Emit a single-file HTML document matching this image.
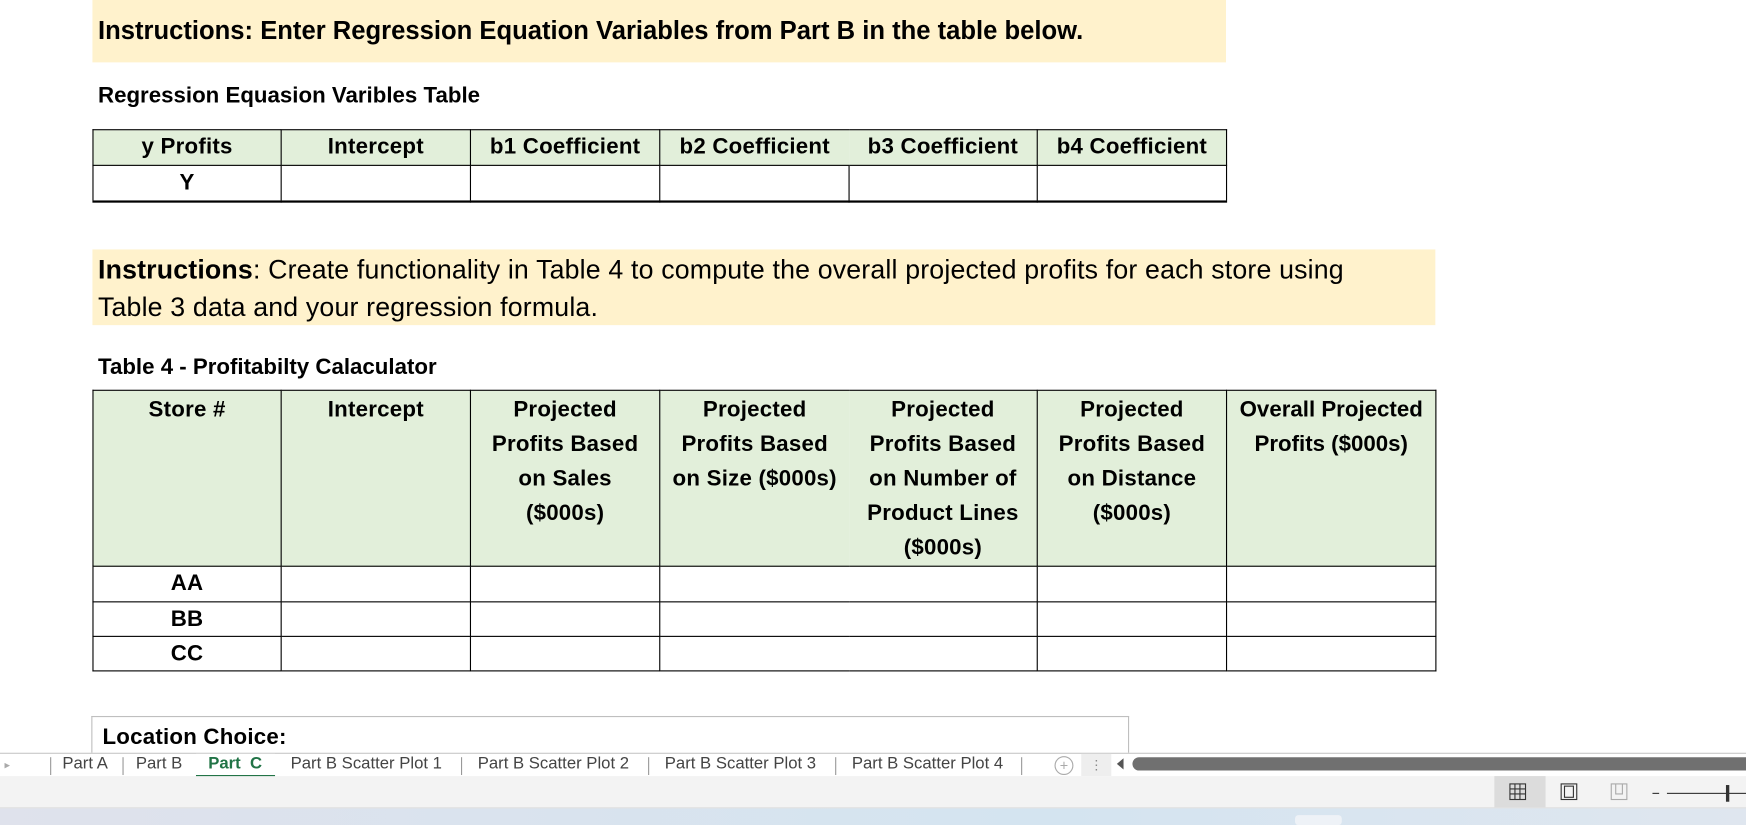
<!DOCTYPE html>
<html><head><meta charset="utf-8"><style>
*{margin:0;padding:0;box-sizing:border-box}
html,body{width:1746px;height:825px;overflow:hidden;background:#fff}
#w{position:absolute;left:0;top:0;width:1568px;height:741px;transform:scale(1.11352);transform-origin:0 0;font-family:"Liberation Sans",sans-serif;color:#000}
.a{position:absolute;white-space:nowrap}
.y{background:#fff2cc}
table{border-collapse:collapse;position:absolute;table-layout:fixed}
td{border:1px solid #000;text-align:center;font-weight:bold;font-size:20px;letter-spacing:0.2px;padding:0;vertical-align:top;white-space:nowrap}
.g td{background:#e2efda}
.tab{position:absolute;top:677px;font-size:15px;color:#444;height:19px;line-height:18px;white-space:nowrap}
.sep{position:absolute;top:680px;width:1px;height:16px;background:#999}
</style></head><body><div id="w">
<div class="a y" style="left:83px;top:0;width:1018px;height:56px"></div>
<div class="a" style="left:88px;top:14px;font-size:23px;font-weight:bold;letter-spacing:0px">Instructions: Enter Regression Equation Variables from Part B in the table below.</div>
<div class="a" style="left:88px;top:75px;font-size:20px;font-weight:bold;letter-spacing:0px">Regression Equasion Varibles Table</div>
<table style="left:83px;top:116px;width:1018px">
<colgroup><col style="width:169px"><col style="width:170px"><col style="width:170px"><col style="width:170px"><col style="width:169px"><col style="width:170px"></colgroup>
<tr class="g" style="height:31px"><td style="line-height:31px">y Profits</td><td style="line-height:31px">Intercept</td><td style="line-height:31px">b1 Coefficient</td><td style="line-height:31px;border-right:none">b2 Coefficient</td><td style="line-height:31px;border-left:none">b3 Coefficient</td><td style="line-height:31px">b4 Coefficient</td></tr>
<tr style="height:31px;border-bottom:2px solid #000"><td style="line-height:31px">Y</td><td></td><td></td><td></td><td></td><td></td></tr>
</table>
<div class="a y" style="left:83px;top:224px;width:1206px;height:68px"></div>
<div class="a" style="left:88px;top:226px;font-size:24px;line-height:34px;width:1190px;letter-spacing:0.15px"><b>Instructions</b>: Create functionality in Table 4 to compute the overall projected profits for each store using<br>Table 3 data and your regression formula.</div>
<div class="a" style="left:88px;top:319px;font-size:20px;font-weight:bold;letter-spacing:0px">Table 4 - Profitabilty Calaculator</div>
<table style="left:83px;top:350px;width:1206px">
<colgroup><col style="width:169px"><col style="width:170px"><col style="width:170px"><col style="width:170px"><col style="width:169px"><col style="width:170px"><col style="width:188px"></colgroup>
<tr class="g" style="height:158px;line-height:31px"><td style="padding-top:2px">Store #</td><td style="padding-top:2px">Intercept</td><td style="padding-top:2px">Projected<br>Profits Based<br>on Sales<br>($000s)</td><td style="padding-top:2px;border-right:none">Projected<br>Profits Based<br>on Size ($000s)</td><td style="padding-top:2px;border-left:none">Projected<br>Profits Based<br>on Number of<br>Product Lines<br>($000s)</td><td style="padding-top:2px">Projected<br>Profits Based<br>on Distance<br>($000s)</td><td style="padding-top:2px;letter-spacing:0">Overall Projected<br>Profits ($000s)</td></tr>
<tr style="height:32px"><td style="line-height:31px">AA</td><td></td><td></td><td style="border-right:none"></td><td style="border-left:none"></td><td></td><td></td></tr>
<tr style="height:31px"><td style="line-height:30px">BB</td><td></td><td></td><td style="border-right:none"></td><td style="border-left:none"></td><td></td><td></td></tr>
<tr style="height:31px"><td style="line-height:30px">CC</td><td></td><td></td><td style="border-right:none"></td><td style="border-left:none"></td><td></td><td></td></tr>
</table>
<div class="a" style="left:82px;top:643px;width:932px;height:40px;border:1px solid #bfbfbf;border-bottom:none"></div>
<div class="a" style="left:92px;top:651px;font-size:20px;font-weight:bold;letter-spacing:0.2px">Location Choice:</div>
<div class="a" style="left:0;top:676px;width:1568px;height:21px;background:#fff;border-top:1px solid #c8c8c8"></div>
<div class="a" style="left:4px;top:682px;font-size:10px;color:#aaa">▸</div>
<div class="sep" style="left:45px"></div>
<div class="tab" style="left:56px">Part A</div>
<div class="sep" style="left:110px"></div>
<div class="tab" style="left:122px">Part B</div>
<div class="a" style="left:176px;top:677px;width:71px;height:21px;background:#fff;border-bottom:2px solid #217346"></div>
<div class="tab" style="left:187px;color:#217346;font-weight:bold">Part&nbsp; C</div>
<div class="tab" style="left:261px">Part B Scatter Plot 1</div>
<div class="sep" style="left:414px"></div>
<div class="tab" style="left:429px">Part B Scatter Plot 2</div>
<div class="sep" style="left:582px"></div>
<div class="tab" style="left:597px">Part B Scatter Plot 3</div>
<div class="sep" style="left:750px"></div>
<div class="tab" style="left:765px">Part B Scatter Plot 4</div>
<div class="sep" style="left:917px"></div>
<div class="a" style="left:947px;top:679px;width:17px;height:17px;border:1px solid #aaa;border-radius:50%;color:#aaa;font-size:13px;line-height:15px;text-align:center">+</div>
<div class="a" style="left:971px;top:677px;width:27px;height:20px;background:#eee;color:#888;font-size:12px;text-align:center;line-height:20px">⋮</div>
<div class="a" style="left:1003px;top:681px;width:0;height:0;border-top:5px solid transparent;border-bottom:5px solid transparent;border-right:6px solid #555"></div>
<div class="a" style="left:1017px;top:680px;width:551px;height:12px;background:#707070;border-radius:6px 0 0 6px"></div>
<div class="a" style="left:0;top:697px;width:1568px;height:29px;background:#f3f3f3;border-bottom:1px solid #ddd"></div>
<div class="a" style="left:1342px;top:697px;width:46px;height:28px;background:#dcdcdc"></div>
<svg class="a" style="left:1355px;top:703px" width="16" height="16"><rect x="1" y="1" width="14" height="14" fill="none" stroke="#333"/><path d="M1 5.5H15M1 10H15M5.5 1V15M10 1V15" stroke="#333"/></svg>
<svg class="a" style="left:1401px;top:703px" width="16" height="16"><rect x="1" y="1" width="14" height="14" fill="none" stroke="#333"/><rect x="4" y="3" width="8" height="10" fill="none" stroke="#333"/></svg>
<svg class="a" style="left:1446px;top:703px" width="16" height="16"><rect x="1" y="1" width="14" height="14" fill="none" stroke="#aaa"/><path d="M5 1V10H11V1" fill="none" stroke="#aaa"/></svg>
<div class="a" style="left:1484px;top:712px;width:6px;height:1px;background:#333"></div>
<div class="a" style="left:1497px;top:712px;width:71px;height:1px;background:#333"></div>
<div class="a" style="left:1550px;top:705px;width:3px;height:15px;background:#333"></div>
<div class="a" style="left:0;top:726px;width:1568px;height:15px;background:linear-gradient(90deg,#dfe2ec,#d4e4f0 60%,#dfe6ef)"></div>
<div class="a" style="left:1163px;top:732px;width:42px;height:9px;background:#eef2f7;border-radius:3px"></div>
</div></body></html>
